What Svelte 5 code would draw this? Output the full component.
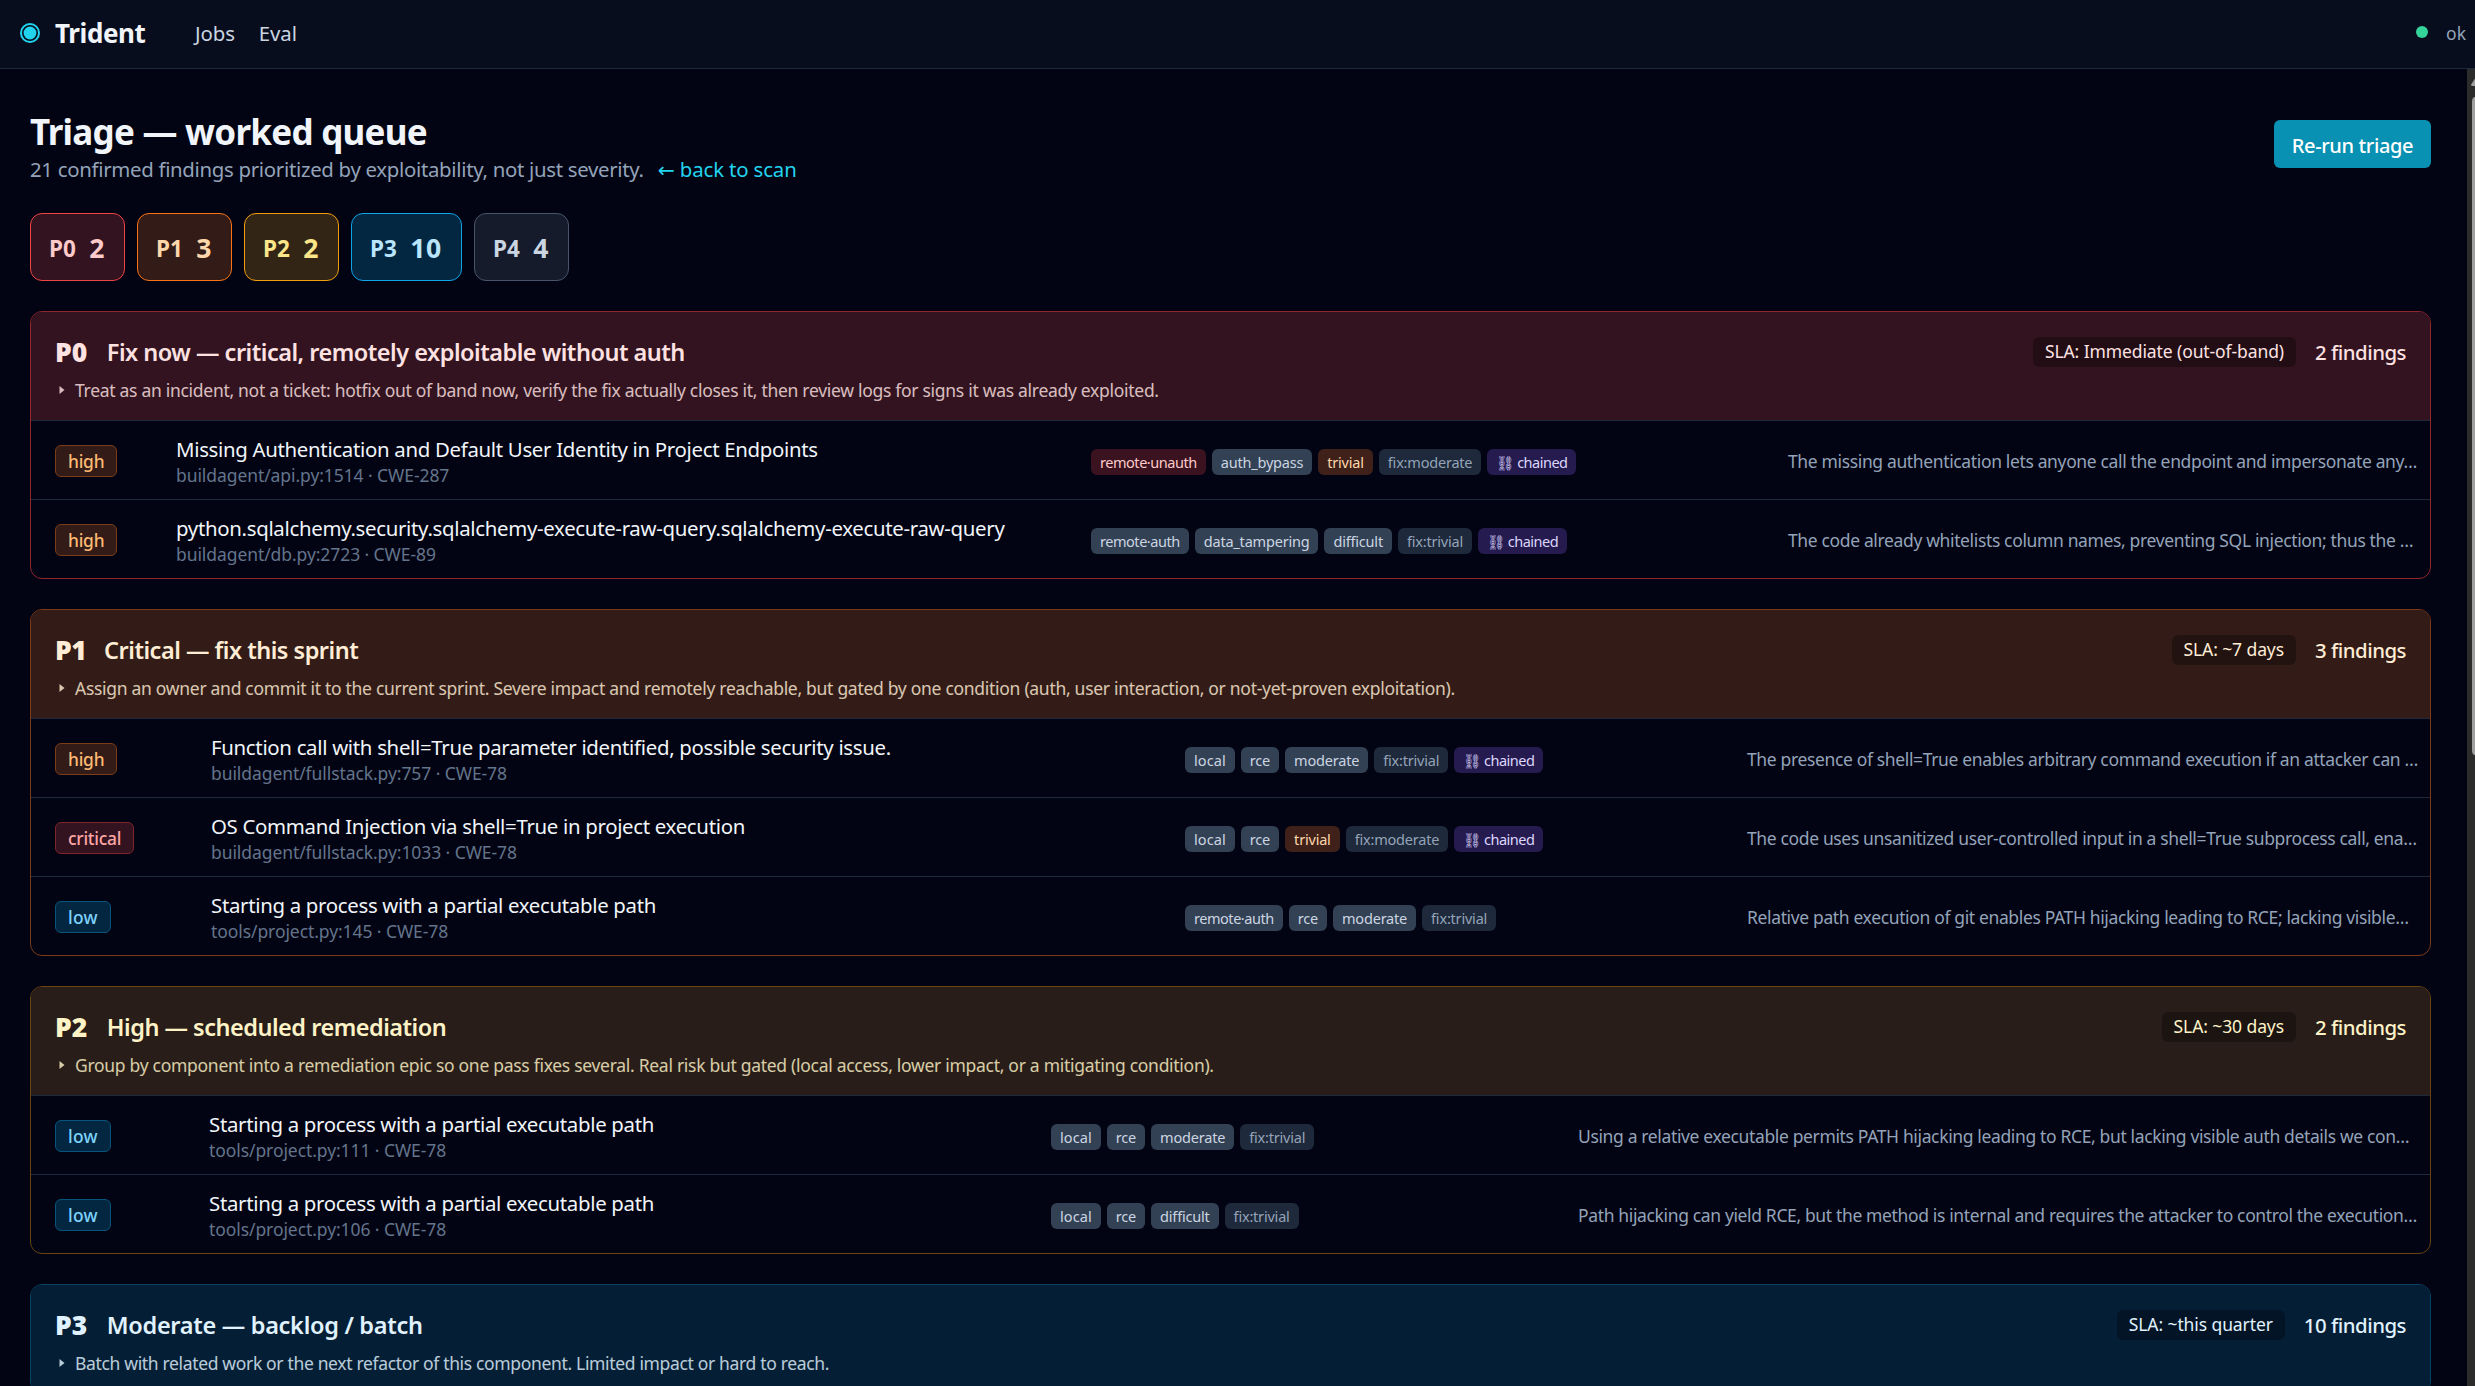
<script>
  const chips = [
    { p: 'P0', n: 2 },
    { p: 'P1', n: 3 },
    { p: 'P2', n: 2 },
    { p: 'P3', n: 10 },
    { p: 'P4', n: 4 }
  ];

  const groups = [
    {
      p: 'P0',
      title: 'Fix now — critical, remotely exploitable without auth',
      hint: 'Treat as an incident, not a ticket: hotfix out of band now, verify the fix actually closes it, then review logs for signs it was already exploited.',
      sla: 'Immediate (out-of-band)',
      count: 2,
      rows: [
        {
          sev: 'high',
          title: 'Missing Authentication and Default User Identity in Project Endpoints',
          meta: 'buildagent/api.py:1514 · CWE-287',
          tags: ['remote·unauth', 'auth_bypass', 'trivial', 'fix:moderate', '⛓ chained'],
          why: 'The missing authentication lets anyone call the endpoint and impersonate any…'
        },
        {
          sev: 'high',
          title: 'python.sqlalchemy.security.sqlalchemy-execute-raw-query.sqlalchemy-execute-raw-query',
          meta: 'buildagent/db.py:2723 · CWE-89',
          tags: ['remote·auth', 'data_tampering', 'difficult', 'fix:trivial', '⛓ chained'],
          why: 'The code already whitelists column names, preventing SQL injection; thus the …'
        }
      ]
    },
    {
      p: 'P1',
      title: 'Critical — fix this sprint',
      hint: 'Assign an owner and commit it to the current sprint. Severe impact and remotely reachable, but gated by one condition (auth, user interaction, or not-yet-proven exploitation).',
      sla: '~7 days',
      count: 3,
      rows: [
        {
          sev: 'high',
          title: 'Function call with shell=True parameter identified, possible security issue.',
          meta: 'buildagent/fullstack.py:757 · CWE-78',
          tags: ['local', 'rce', 'moderate', 'fix:trivial', '⛓ chained'],
          why: 'The presence of shell=True enables arbitrary command execution if an attacker can …'
        },
        {
          sev: 'critical',
          title: 'OS Command Injection via shell=True in project execution',
          meta: 'buildagent/fullstack.py:1033 · CWE-78',
          tags: ['local', 'rce', 'trivial', 'fix:moderate', '⛓ chained'],
          why: 'The code uses unsanitized user-controlled input in a shell=True subprocess call, ena…'
        },
        {
          sev: 'low',
          title: 'Starting a process with a partial executable path',
          meta: 'tools/project.py:145 · CWE-78',
          tags: ['remote·auth', 'rce', 'moderate', 'fix:trivial'],
          why: 'Relative path execution of git enables PATH hijacking leading to RCE; lacking visible…'
        }
      ]
    },
    {
      p: 'P2',
      title: 'High — scheduled remediation',
      hint: 'Group by component into a remediation epic so one pass fixes several. Real risk but gated (local access, lower impact, or a mitigating condition).',
      sla: '~30 days',
      count: 2,
      rows: [
        {
          sev: 'low',
          title: 'Starting a process with a partial executable path',
          meta: 'tools/project.py:111 · CWE-78',
          tags: ['local', 'rce', 'moderate', 'fix:trivial'],
          why: 'Using a relative executable permits PATH hijacking leading to RCE, but lacking visible auth details we con…'
        },
        {
          sev: 'low',
          title: 'Starting a process with a partial executable path',
          meta: 'tools/project.py:106 · CWE-78',
          tags: ['local', 'rce', 'difficult', 'fix:trivial'],
          why: 'Path hijacking can yield RCE, but the method is internal and requires the attacker to control the execution…'
        }
      ]
    },
    {
      p: 'P3',
      title: 'Moderate — backlog / batch',
      hint: 'Batch with related work or the next refactor of this component. Limited impact or hard to reach.',
      sla: '~this quarter',
      count: 10,
      rows: []
    }
  ];

  function tone(tag) {
    if (tag === 'remote·unauth') return 'red tight';
    if (tag === 'remote·auth') return 'slate tight';
    if (tag === 'trivial') return 'orange';
    if (tag.startsWith('fix:')) return 'dim';
    if (tag.endsWith('chained')) return 'violet';
    if (tag === 'local') return 'slate loose';
    return 'slate';
  }
</script>

<div class="app">
  <header class="topbar">
    <svg class="logo" viewBox="0 0 20 20">
      <circle cx="10" cy="10" r="9" fill="none" stroke="#22d3ee" stroke-width="2" />
      <circle cx="10" cy="10" r="6.4" fill="#22d3ee" />
    </svg>
    <span class="brand">Trident</span>
    <nav>
      <a href="#jobs">Jobs</a>
      <a href="#eval">Eval</a>
    </nav>
    <span class="status"><i></i>ok</span>
  </header>

  <div class="body">
    <main>
      <div class="head">
        <div>
          <h1>Triage — worked queue</h1>
          <p class="sub">
            <span>21 confirmed findings prioritized by exploitability, not just severity.</span>
            <a href="#scan"><span class="arrow">←</span> back to scan</a>
          </p>
        </div>
        <button>Re-run triage</button>
      </div>

      <div class="chips">
        {#each chips as c}
          <div class="chip {c.p.toLowerCase()}"><span class="cp">{c.p}</span><span class="cn">{c.n}</span></div>
        {/each}
      </div>

      {#each groups as g}
        <section class="group {g.p.toLowerCase()}">
          <div class="ghead">
            <div class="gline">
              <span class="gp">{g.p}</span>
              <span class="gt">{g.title}</span>
              <span class="sla">SLA: {g.sla}</span>
              <span class="count">{g.count} findings</span>
            </div>
            <div class="hint">
              <svg viewBox="0 0 6 8"><path d="M0.5 0 L5.5 4 L0.5 8 Z" fill="currentColor" /></svg>
              <span>{g.hint}</span>
            </div>
          </div>
          {#each g.rows as r}
            <div class="row">
              <div class="sevcell"><span class="sev {r.sev}">{r.sev}</span></div>
              <div class="what">
                <div class="title">{r.title}</div>
                <div class="meta">{r.meta}</div>
              </div>
              <div class="tags">
                {#each r.tags as t}<span class="tag {tone(t)}">{t}</span>{/each}
              </div>
              <div class="why">{r.why}</div>
            </div>
          {/each}
        </section>
      {/each}
    </main>
    <div class="scroll">
      <svg viewBox="0 0 8 28"><path d="M8 9.5 L4.3 15.2 Q3.6 17 5.2 17 H8 Z" fill="#9f9f9f" /></svg>
      <div class="thumb"></div>
    </div>
  </div>
</div>

<style>
  :global(body) {
    background: #020414;
    overflow: hidden;
  }
  .app {
    height: 1386px;
    display: flex;
    flex-direction: column;
    overflow: hidden;
    background: #020414;
    color: #e2e8f0;
    font-family: 'Noto Sans', 'DejaVu Sans', sans-serif;
    font-size: 20.4px;
    white-space: nowrap;
  }
  a {
    text-decoration: none;
  }
  .topbar {
    flex: none;
    box-sizing: border-box;
    height: 69px;
    padding: 0 9px 2px 20px;
    display: flex;
    align-items: center;
    background: #080d1e;
    border-bottom: 1px solid #1e293b;
  }
  .logo {
    width: 20px;
    height: 20px;
  }
  .brand {
    margin-left: 15px;
    width: 140px;
    font-size: 26px;
    font-weight: 700;
    letter-spacing: -0.4px;
    color: #f1f5f9;
  }
  nav {
    display: flex;
    gap: 24px;
    flex: 1;
  }
  nav a {
    color: #cbd5e1;
    letter-spacing: -0.1px;
  }
  .status {
    display: flex;
    align-items: center;
    gap: 18px;
    font-size: 17.5px;
    color: #94a3b8;
  }
  .status i {
    width: 12px;
    height: 12px;
    border-radius: 50%;
    background: #34d399;
    margin-bottom: 2px;
  }
  .body {
    flex: 1;
    min-height: 0;
    display: flex;
  }
  main {
    flex: 1;
    min-width: 0;
    padding: 42px 36px 0 30px;
    overflow: hidden;
  }
  .scroll {
    width: 8px;
    background: #2c2c2c;
    display: flex;
    flex-direction: column;
  }
  .scroll svg {
    width: 8px;
    height: 28px;
    flex: none;
  }
  .thumb {
    margin-left: 5px;
    height: 658px;
    background: #9f9f9f;
    border-top-left-radius: 5px 8px;
    border-bottom-left-radius: 5px 8px;
  }
  .head {
    display: flex;
    justify-content: space-between;
    height: 102px;
  }
  h1 {
    margin: 0;
    font-size: 35px;
    line-height: 42px;
    font-weight: 700;
    color: #f1f5f9;
    letter-spacing: -0.74px;
  }
  .sub {
    margin: 0;
    line-height: 33px;
    color: #94a3b8;
    display: flex;
    gap: 14px;
    letter-spacing: -0.31px;
  }
  .sub a {
    color: #22d3ee;
    letter-spacing: -0.15px;
  }
  button {
    margin: 9px 0 0;
    width: 157px;
    height: 48px;
    border: 0;
    border-radius: 6px;
    background: #0891b2;
    color: #fff;
    font: 500 20px 'Noto Sans', sans-serif;
    letter-spacing: -0.36px;
    padding: 2px 0 0;
  }
  .chips {
    display: flex;
    gap: 12px;
    margin-bottom: 30px;
  }
  .chip {
    box-sizing: border-box;
    height: 68px;
    min-width: 95px;
    padding: 1px 18px 0;
    display: flex;
    align-items: center;
    gap: 13.5px;
    border: 1px solid;
    border-radius: 12px;
    font-weight: 700;
  }
  .cp {
    font-size: 22.5px;
    padding-top: 1px;
  }
  .cn {
    font-size: 26.6px;
  }
  .chip.p0 { background: #32131f; border-color: #ef4444; color: #fecaca; }
  .chip.p1 { background: #331c17; border-color: #f97316; color: #fed7aa; }
  .chip.p2 { background: #322515; border-color: #f59e0b; color: #fde68a; }
  .chip.p3 { background: #042741; border-color: #0ea5e9; color: #bae6fd; min-width: 111px; }
  .chip.p3 .cn { letter-spacing: 0.5px; }
  .chip.p4 { background: #161b2c; border-color: #475569; color: #cbd5e1; }

  .group {
    border: 1px solid;
    border-radius: 12px;
    overflow: hidden;
    margin-bottom: 30px;
  }
  .group.p0 { border-color: #91262d; --bg: #32131f; --fg: #fee2e2; --cols: 121px 915px 697px; }
  .group.p1 { border-color: #7c3a18; --bg: #331c17; --fg: #ffedd5; --cols: 156px 974px 562px; }
  .group.p2 { border-color: #694310; --bg: #281d18; --fg: #fef3c7; --cols: 154px 842px 527px; }
  .group.p3 { border-color: #054465; --bg: #041e35; --fg: #e0f2fe; --cols: 154px 842px 527px; }
  .ghead {
    box-sizing: border-box;
    height: 108px;
    padding: 23px 24px 0;
    background: var(--bg);
    color: var(--fg);
  }
  .gline {
    display: flex;
    align-items: center;
    height: 34px;
  }
  .gp {
    font-size: 26.5px;
    font-weight: 900;
    margin-right: 19.5px;
  }
  .group.p1 .gp {
    letter-spacing: -0.6px;
    margin-right: 18px;
  }
  .gt {
    font-size: 23.5px;
    font-weight: 600;
    letter-spacing: -0.5px;
    flex: 1;
  }
  .group.p3 .gt {
    letter-spacing: -0.3px;
  }
  .sla {
    box-sizing: border-box;
    height: 30px;
    line-height: 29px;
    padding: 0 12px;
    border-radius: 6px;
    background: rgba(0, 0, 0, 0.3);
    font-size: 17.5px;
    letter-spacing: -0.1px;
    margin-right: 19px;
  }
  .count {
    font-size: 20.4px;
    font-weight: 500;
    letter-spacing: -0.5px;
  }
  .hint {
    display: flex;
    align-items: center;
    gap: 11px;
    height: 30px;
    margin-top: 6px;
    padding-left: 4px;
    font-size: 17.5px;
    letter-spacing: -0.29px;
    opacity: 0.82;
  }
  .group.p3 .hint {
    letter-spacing: -0.34px;
  }
  .hint svg {
    width: 6px;
    height: 8px;
    margin-right: -1px;
  }
  .row {
    box-sizing: border-box;
    height: 79px;
    border-top: 1px solid #1e293b;
    padding-left: 24px;
    display: grid;
    grid-template-columns: var(--cols) 1fr;
    align-items: center;
  }
  .sevcell {
    padding-top: 2px;
  }
  .sev {
    display: inline-block;
    box-sizing: border-box;
    height: 32px;
    line-height: 31px;
    padding: 0 12px;
    border: 1px solid;
    border-radius: 6px;
    font-size: 17.4px;
    font-weight: 500;
    letter-spacing: -0.25px;
    vertical-align: middle;
  }
  .sev.low {
    letter-spacing: 0.3px;
  }
  .sev.high { background: #331c17; border-color: #7c3d16; color: #fdba74; }
  .sev.critical { background: #32131f; border-color: #7f232d; color: #fca5a5; }
  .sev.low { background: #042741; border-color: #07547c; color: #7dd3fc; }
  .what {
    padding-top: 3px;
  }
  .title {
    line-height: 27px;
    letter-spacing: -0.31px;
    color: #f1f5f9;
  }
  .meta {
    font-size: 17.5px;
    letter-spacing: -0.08px;
    line-height: 25px;
    color: #64748b;
  }
  .tags {
    display: flex;
    gap: 6px;
    padding-top: 3px;
  }
  .tag {
    height: 26px;
    line-height: 26px;
    padding: 0 9px;
    border-radius: 6px;
    font-size: 14.5px;
    letter-spacing: -0.2px;
  }
  .tag.tight { letter-spacing: -0.46px; }
  .tag.loose { letter-spacing: 0.1px; }
  .tag.red { background: #3b1220; color: #fecaca; }
  .tag.orange { background: #40211a; color: #fed7aa; }
  .tag.slate { background: #334155; color: #cbd5e1; }
  .tag.dim { background: #1e293b; color: #94a3b8; }
  .tag.violet { background: #251b4e; color: #ddd6fe; letter-spacing: -0.5px; }
  .why {
    padding-top: 1px;
    font-size: 17.5px;
    letter-spacing: -0.36px;
    color: #94a3b8;
  }
</style>
